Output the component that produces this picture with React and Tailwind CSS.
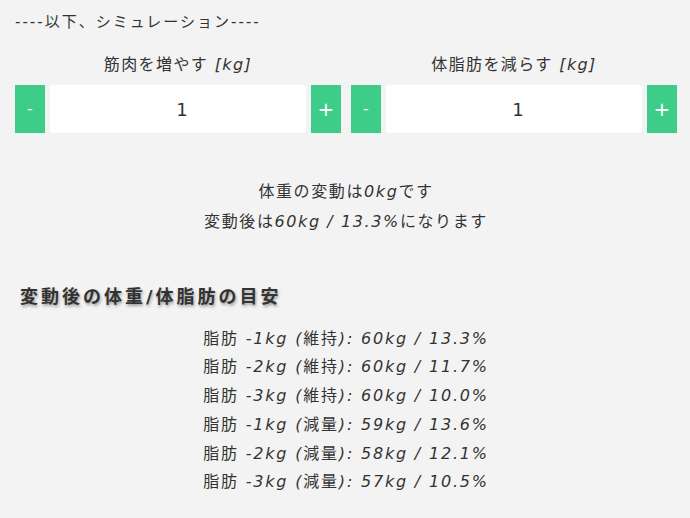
import React, { useState } from "react";

const FONT = { fontFamily: '"DejaVu Sans", "Noto Sans CJK JP", sans-serif' };

function Stepper({ label, value, onChange }) {
  return (
    <div className="flex-1 flex flex-col">
      <div className="h-[24px] leading-[24px] text-center text-[16px] tracking-[1.4px] text-[#333]">
        {label} <i>[kg]</i>
      </div>
      <div className="mt-[8.5px] flex gap-[5px] h-[48px]">
        <button
          onClick={() => onChange(value - 1)}
          className="w-[30px] h-full bg-[#3ecd89] text-white text-[16px] flex items-center justify-center"
        >
          -
        </button>
        <div className="flex-1 bg-white rounded-[3px] flex items-center justify-center pl-[8px] text-[18px] text-[#333]">
          {value}
        </div>
        <button
          onClick={() => onChange(value + 1)}
          className="w-[30px] h-full bg-[#3ecd89] text-white text-[20px] flex items-center justify-center"
        >
          +
        </button>
      </div>
    </div>
  );
}

export default function App() {
  const [muscle, setMuscle] = useState(1);
  const [fat, setFat] = useState(1);

  const rows = [
    ["-1kg", "維持", "60kg", "13.3%"],
    ["-2kg", "維持", "60kg", "11.7%"],
    ["-3kg", "維持", "60kg", "10.0%"],
    ["-1kg", "減量", "59kg", "13.6%"],
    ["-2kg", "減量", "58kg", "12.1%"],
    ["-3kg", "減量", "57kg", "10.5%"],
  ];

  return (
    <div className="w-[690px] h-[518px] bg-[#f3f3f3] text-[#333] overflow-hidden" style={FONT}>
      <div className="pl-[15px] pr-[13px]">
        <div className="pt-[10px] h-[34px] leading-[24px] text-[15px] tracking-[2px]">
          ----以下、シミュレーション----
        </div>

        <div className="mt-[18.5px] flex gap-[10px]">
          <Stepper label="筋肉を増やす" value={muscle} onChange={setMuscle} />
          <Stepper label="体脂肪を減らす" value={fat} onChange={setFat} />
        </div>

        <div className="mt-[44px] text-center text-[16px] leading-[30px] tracking-[1.6px]">
          <div>
            体重の変動は<i>0kg</i>です
          </div>
          <div>
            変動後は<i>60kg / 13.3%</i>になります
          </div>
        </div>

        <h2 className="mt-[45px] pl-[5px] h-[30px] leading-[30px] text-[18px] font-bold tracking-[3px] text-[#333] [text-shadow:1px_2px_3px_rgba(0,0,0,0.35)]">
          変動後の体重/体脂肪の目安
        </h2>

        <div className="mt-[12.5px] text-center text-[16px] leading-[28.8px] tracking-[1.8px]">
          {rows.map((r, i) => (
            <div key={i}>
              脂肪 <i>{r[0]} (</i>
              {r[1]}
              <i>): {r[2]} / {r[3]}</i>
            </div>
          ))}
        </div>
      </div>
    </div>
  );
}
